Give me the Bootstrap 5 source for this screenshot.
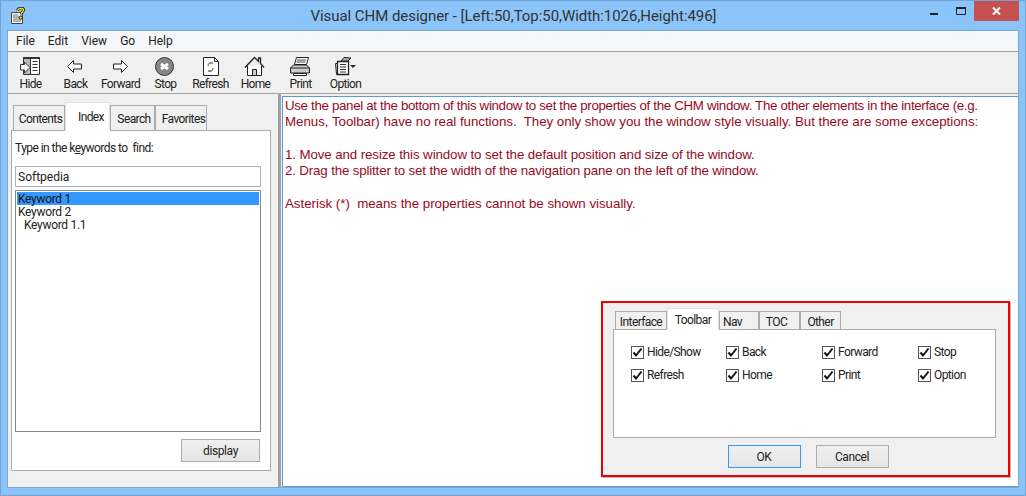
<!doctype html>
<html lang="en"><head><meta charset="utf-8"><title>Visual CHM designer</title>
<link href="https://cdn.jsdelivr.net/npm/bootstrap@5.3.0/dist/css/bootstrap.min.css" rel="stylesheet">
<style>
html,body{height:496px;overflow:hidden}
body{background:#8bc4f8;font:12px/15px Roboto,"Open Sans",sans-serif;color:#222;display:flex;flex-direction:column;box-shadow:inset 0 0 0 1px #74a4d4}
.wtitle{height:30px;position:relative;font-size:15px;color:#333;flex:none}
.wtitle-text{padding-top:6px;line-height:20px;letter-spacing:-.05px;padding-left:1px}
.wapp{position:absolute;left:10px;top:7px}
.wctrl{position:absolute;right:7px;top:1px}
.wclose{width:45px;height:20px;background:#c75050}
.client{height:458px;margin:0 7px 8px 7px;border:1px solid #79a8d6;background:#f0f0f0;display:flex;flex-direction:column;flex:none}
.mbar{height:20px;background:#f5f6f7;border-bottom:1px solid #a0a0a0;padding-left:8px;gap:13px;box-sizing:content-box;line-height:21px;font-size:12px;flex:none}
.tbar{height:42px;border-bottom:1px solid #a0a0a0;background:#f0f0f0;flex:none}
.tbtn{width:45px;text-align:center;flex:none;padding-top:4px;line-height:15px;font-size:12px;letter-spacing:-.65px;color:#222}
.tbtn svg{display:block;margin:0 auto}
.work{flex:1;min-height:0}
.lpane{width:270px;flex:none;padding:9px 0 0 3px;background:#f0f0f0}
.split{width:3px;background:#a0a0a0;flex:none}
.rpane{flex:1;margin:2px 0 0 1px;border:1px solid #5b9bdc;border-right:0;background:#fff;padding:1px 0 0 2px;display:flex;flex-direction:column;font:13.33px/16.33px "Liberation Sans",sans-serif;color:#960a24;min-width:0}
.rpane p{margin:0}
.rpane p.gap{margin-top:16.33px}
.ln{display:block;white-space:nowrap}
.ln1{letter-spacing:-.336px}.ln2{letter-spacing:-.04px}.ln3{letter-spacing:-.11px}.ln4{letter-spacing:-.16px}.ln5{letter-spacing:-.03px}
.wtabs{border:0;flex-wrap:nowrap;align-items:flex-end;position:relative;z-index:1;height:27px;padding-left:2px}
.wtabs .nav-link{border:1px solid #acacac;border-radius:0;background:#f0f0f0;color:#222;font-size:12px;line-height:15px;letter-spacing:-.6px;padding:6px 0 0;height:26px;margin:0 0 -1px 0;text-align:center}
.wtabs .nav-link.active{background:#fff;height:29px;border-bottom-color:#fff;padding-top:7px;color:#222}
.wtabs .pl3{padding-left:3px}.wtabs .pl7{padding-left:7px}.wtabs .pl5{padding-left:5px}
.tw52{width:52px}.tw45{width:45px}.tw40{width:40px}.tw41{width:41px}
.lbody{width:260px;height:341px;border:1px solid #acacac;background:#fff;padding:10px 0 0 3px}
.kw{margin:0 0 10px;line-height:15px;letter-spacing:-.55px;color:#222}
.kw u{text-decoration:underline}
.kinput{height:21px;border:1px solid #a9b0b8;border-radius:0;padding:0 2px;font-size:12px;line-height:19px;color:#222;width:246px;margin-bottom:3px;min-height:0}
.klist{height:242px;width:246px;border:1px solid #828790;padding:1px 0 0 1px;border-radius:0;margin-bottom:7px}
.klist .list-group-item{border:0;padding:1px 0 0 1px;height:13px;background:none;line-height:13px;font-size:12px;letter-spacing:-.3px;color:#222;border-radius:0}
.klist .list-group-item.active{background:#3399ff;color:#111;width:242px}
.klist .list-group-item.sub{padding-left:7px}
.brow{width:245px}
.wbtn{background:linear-gradient(#f0f0f0,#e5e5e5);border:1px solid #acacac;border-radius:0;font-size:12px;line-height:15px;letter-spacing:-.4px;padding:2px 0 0;color:#222;width:79px;height:23px}
.wbtn.def{border-color:#3399ff}
.dpanel{margin-top:auto;margin-bottom:9px;margin-right:8px;align-self:flex-end;width:409px;height:176px;border:2px solid #ee0000;background:#f0f0f0;padding:6px 0 0 10px;color:#222;flex:none;box-shadow:1px 1px 0 #bbb;font:12px/15px Roboto,sans-serif}
.dtabs{height:20px}
.dtabs .nav-link{height:19px;line-height:15px;padding:3px 0 0}
.dtabs .nav-link.active{height:22px;padding-top:4px}
.dtabs .nav-link.navtab{text-align:left;padding-left:3px}
.dtabs .nav-link.toctab{padding-right:6px}
.dbody{width:383px;height:109px;border:1px solid #acacac;background:#fff;padding:15px 0 0 17px}
.cgrid{display:grid;grid-template-columns:95px 96px 96px 90px;row-gap:8px}
.chk{display:flex;align-items:center;gap:3px;height:15px;margin:0;padding:0;min-height:0;letter-spacing:-.6px}
.chk .form-check-input{width:13px;height:13px;margin:0;float:none;border:1px solid #555;border-radius:0;background-color:#fff;flex:none;background-image:url("data:image/svg+xml,%3Csvg xmlns='http://www.w3.org/2000/svg' viewBox='0 0 13 13'%3E%3Cpath d='M2.500 6.500l2.500 3 5.500-7' fill='none' stroke='%23111' stroke-width='2'/%3E%3C/svg%3E");background-size:13px 13px}
.dbtns{padding-top:7px;gap:15px;width:383px;padding-left:7px}
.dbtns .wbtn{width:73px}
</style></head>
<body>
<div class="wtitle text-center">
 <svg class="wapp" width="16" height="17" viewBox="0 0 16 17"><path d="M1.500 5.500h9l2 2v9h-11z" fill="#fff" stroke="#444"/><path d="M3 8h5M3 10h8M3 12h8M3 14h8" stroke="#666"/><path d="M7.500 3.500C8 1 12 0 13.500 2c1 2-2 3-2.500 5.500" fill="none" stroke="#222" stroke-width="2.800"/><path d="M7.500 3.500C8 1.500 12 .5 13.500 2.200c.8 1.800-2 3-2.500 5" fill="none" stroke="#f4e400" stroke-width="1.300"/><circle cx="10.800" cy="10.500" r="1.600" fill="#f4e400" stroke="#222"/></svg>
 <div class="wtitle-text">Visual CHM designer - [Left:50,Top:50,Width:1026,Height:496]</div>
 <div class="wctrl d-flex">
  <svg width="44" height="20" viewBox="0 0 44 20"><path d="M0 12h8v2H0z" fill="#222"/><path d="M26.500 6.500h9v7h-9z" fill="none" stroke="#222"/><path d="M26 7h10" stroke="#222" stroke-width="2"/></svg>
  <div class="wclose d-flex align-items-center justify-content-center"><svg width="9" height="8" viewBox="0 0 9 8"><path d="M1 .5l7 7M8 .5l-7 7" stroke="#fff" stroke-width="2"/></svg></div>
 </div>
</div>
<div class="client">
 <div class="mbar d-flex"><span>File</span><span>Edit</span><span>View</span><span>Go</span><span>Help</span></div>
 <div class="tbar d-flex">
  <div class="tbtn"><svg width="23" height="21" viewBox="0 0 23 21"><path d="M4.500 1.500h16v17h-16z" fill="#fff" stroke="#333"/><path d="M5 3h6v15H5z" fill="#bbb"/><path d="M4 2h17" stroke="#333" stroke-width="2"/><path d="M11.500 2v17" stroke="#333"/><path d="M13.500 5.500h5M13.500 8.500h5M13.500 11.500h5M13.500 14.500h5" stroke="#333"/><path d="M1.500 8.500h4V6l5.500 5.500L5.500 17v-3h-4z" fill="#f4f4f4" stroke="#333"/></svg>Hide</div>
  <div class="tbtn"><svg width="23" height="21" viewBox="0 0 23 21"><path d="M3.500 10.500l6-6v3.500h8v5h-8v3.500z" fill="#fff" stroke="#222"/><path d="M3 10h1v1H3z" fill="#3a3"/></svg>Back</div>
  <div class="tbtn"><svg width="23" height="21" viewBox="0 0 23 21"><path d="M18.500 10.500l-6-6V8h-8v5h8v3.500z" fill="#fff" stroke="#222"/></svg>Forward</div>
  <div class="tbtn"><svg width="23" height="21" viewBox="0 0 23 21"><circle cx="10.500" cy="10.500" r="9" fill="#858585" stroke="#333"/><path d="M7 8l7 5M14 8l-7 5" stroke="#fff" stroke-width="3"/></svg>Stop</div>
  <div class="tbtn"><svg width="23" height="21" viewBox="0 0 23 21"><path d="M4.500 1.500h11l4 4v14h-15z" fill="#fff" stroke="#222"/><path d="M15.500 1.500v4h4" fill="none" stroke="#222"/><path d="M9 10c0-3 3-4 4-3M11 7h3M14 12c0 3-3 4-4 3M9 15h3" fill="none" stroke="#777" stroke-width="1.300"/></svg>Refresh</div>
  <div class="tbtn"><svg width="23" height="21" viewBox="0 0 23 21"><path d="M1 11.500L10.500 1.500l4 4V2h2v5.500l3.500 4" fill="none" stroke="#222" stroke-width="1.300"/><path d="M3.500 10v9.500h14V10" fill="#fff" stroke="#222"/><path d="M8.500 13.500h4v6h-4z" fill="#ccc" stroke="#222"/></svg>Home</div>
  <div class="tbtn"><svg width="23" height="21" viewBox="0 0 23 21"><path d="M7.500 1.500h12l-2 7h-12z" fill="#fff" stroke="#222"/><path d="M8 4h9M7.500 6h9" stroke="#444"/><path d="M1.500 12l3-3h13l3 3v5h-19z" fill="#ccc" stroke="#222"/><path d="M1.500 12h19" stroke="#222"/><path d="M4.500 17.500h13v2h-13z" fill="#fff" stroke="#222"/></svg>Print</div>
  <div class="tbtn"><svg width="23" height="21" viewBox="0 0 23 21"><path d="M3.500 5.500h11v13h-11z" fill="#fff" stroke="#222" stroke-width="1.300"/><path d="M1.500 7.500h2v11h-1z" fill="#ccc" stroke="#222"/><path d="M6 8.500h6M6 11h6M6 13.500h6M6 16h6" stroke="#333"/><path d="M7 5l3-3.500 7 .5-3 3z" fill="#aaa" stroke="#222"/><path d="M16 9h6l-3 3z" fill="#222"/></svg>Option</div>
 </div>
 <div class="work d-flex">
  <div class="lpane">
   <ul class="nav nav-tabs wtabs">
    <li class="nav-item"><a class="nav-link tw52 pl3" href="#">Contents</a></li>
    <li class="nav-item"><a class="nav-link active tw45 pl7" href="#">Index</a></li>
    <li class="nav-item"><a class="nav-link tw45 pl3" href="#">Search</a></li>
    <li class="nav-item"><a class="nav-link tw52 pl5" href="#">Favorites</a></li>
   </ul>
   <div class="lbody">
    <div class="kw">Type in the k<u>e</u>ywords to&nbsp; find:</div>
    <input class="form-control kinput" value="Softpedia">
    <div class="list-group klist">
     <div class="list-group-item active">Keyword 1</div>
     <div class="list-group-item">Keyword 2</div>
     <div class="list-group-item sub">Keyword 1.1</div>
    </div>
    <div class="d-flex justify-content-end brow"><button class="btn wbtn">display</button></div>
   </div>
  </div>
  <div class="split"></div>
  <div class="rpane">
   <p><span class="ln ln1">Use the panel at the bottom of this window to set the properties of the CHM window. The other elements in the interface (e.g.</span><span class="ln ln2">Menus, Toolbar) have no real functions.&nbsp; They only show you the window style visually. But there are some exceptions:</span></p>
   <p class="gap"><span class="ln ln3">1. Move and resize this window to set the default position and size of the window.</span><span class="ln ln4">2. Drag the splitter to set the width of the navigation pane on the left of the window.</span></p>
   <p class="gap"><span class="ln ln5">Asterisk (*)&nbsp; means the properties cannot be shown visually.</span></p>
   <div class="dpanel">
    <ul class="nav nav-tabs wtabs dtabs">
     <li class="nav-item"><a class="nav-link tw52" href="#">Interface</a></li>
     <li class="nav-item"><a class="nav-link active tw52" href="#">Toolbar</a></li>
     <li class="nav-item"><a class="nav-link navtab tw40" href="#">Nav</a></li>
     <li class="nav-item"><a class="nav-link toctab tw41" href="#">TOC</a></li>
     <li class="nav-item"><a class="nav-link tw41" href="#">Other</a></li>
    </ul>
    <div class="dbody"><div class="cgrid">
     <label class="chk form-check"><input class="form-check-input" type="checkbox" checked>Hide/Show</label>
     <label class="chk form-check"><input class="form-check-input" type="checkbox" checked>Back</label>
     <label class="chk form-check"><input class="form-check-input" type="checkbox" checked>Forward</label>
     <label class="chk form-check"><input class="form-check-input" type="checkbox" checked>Stop</label>
     <label class="chk form-check"><input class="form-check-input" type="checkbox" checked>Refresh</label>
     <label class="chk form-check"><input class="form-check-input" type="checkbox" checked>Home</label>
     <label class="chk form-check"><input class="form-check-input" type="checkbox" checked>Print</label>
     <label class="chk form-check"><input class="form-check-input" type="checkbox" checked>Option</label>
    </div></div>
    <div class="d-flex justify-content-center dbtns"><button class="btn wbtn def">OK</button><button class="btn wbtn">Cancel</button></div>
   </div>
  </div>
 </div>
</div>
</body></html>
